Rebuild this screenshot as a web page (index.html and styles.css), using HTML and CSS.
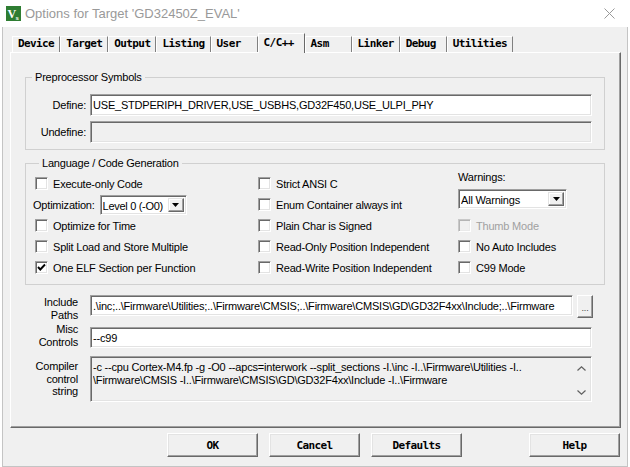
FILE: index.html
```html
<!DOCTYPE html>
<html>
<head>
<meta charset="utf-8">
<title>Options for Target</title>
<link rel="stylesheet" href="styles.css">
</head>
<body>
<div class="titlebar">
  <svg class="appicon" viewBox="0 0 15 15"><rect width="15" height="15" fill="#2e7d32"/><text x="1.5" y="11.5" font-family="Liberation Serif" font-weight="bold" font-size="12" fill="#fff">V</text><text x="9.5" y="13.5" font-family="Liberation Sans" font-weight="bold" font-size="6" fill="#fff">s</text></svg>
  <span class="title">Options for Target 'GD32450Z_EVAL'</span>
  <svg class="close" viewBox="0 0 11 11"><path d="M0.5 0.5 L10.5 10.5 M10.5 0.5 L0.5 10.5" stroke="#999" stroke-width="1" fill="none"/></svg>
</div>
<div class="window">
  <div class="tabs">
    <div class="tab">Device</div>
    <div class="tab">Target</div>
    <div class="tab">Output</div>
    <div class="tab">Listing</div>
    <div class="tab">User</div>
    <div class="tab active">C/C++</div>
    <div class="tab">Asm</div>
    <div class="tab">Linker</div>
    <div class="tab">Debug</div>
    <div class="tab">Utilities</div>
  </div>
  <div class="panel">
    <fieldset class="group pre">
      <legend>Preprocessor Symbols</legend>
      <div class="def-row">
        <span class="def-label">Define:</span>
        <div class="edit wide">USE_STDPERIPH_DRIVER,USE_USBHS,GD32F450,USE_ULPI_PHY</div>
      </div>
      <div class="def-row second">
        <span class="def-label">Undefine:</span>
        <div class="edit wide disabled"></div>
      </div>
    </fieldset>
    <fieldset class="group lang">
      <legend>Language / Code Generation</legend>
      <div class="lang-grid">
        <div class="col col-left">
          <div class="check"><span class="cb"></span>Execute-only Code</div>
          <div class="opt-row"><span>Optimization:</span>
            <div class="combo opt-combo"><span class="combo-text">Level 0 (-O0)</span><span class="drop"><svg viewBox="0 0 7 4"><path d="M0 0 H7 L3.5 4 Z" fill="#000"/></svg></span></div>
          </div>
          <div class="check"><span class="cb"></span>Optimize for Time</div>
          <div class="check"><span class="cb"></span>Split Load and Store Multiple</div>
          <div class="check"><span class="cb"><svg viewBox="0 0 11 11"><path d="M2 5 L4.3 7.5 L9 2.5" stroke="#000" stroke-width="1.9" fill="none"/></svg></span>One ELF Section per Function</div>
        </div>
        <div class="col col-mid">
          <div class="check"><span class="cb"></span>Strict ANSI C</div>
          <div class="check"><span class="cb"></span>Enum Container always int</div>
          <div class="check"><span class="cb"></span>Plain Char is Signed</div>
          <div class="check"><span class="cb"></span>Read-Only Position Independent</div>
          <div class="check"><span class="cb"></span>Read-Write Position Independent</div>
        </div>
        <div class="col col-right">
          <div class="warn-block">
            <span class="warn-label">Warnings:</span>
            <div class="combo warn-combo"><span class="combo-text">All Warnings</span><span class="drop"><svg viewBox="0 0 7 4"><path d="M0 0 H7 L3.5 4 Z" fill="#000"/></svg></span></div>
          </div>
          <div class="check disabled"><span class="cb"></span>Thumb Mode</div>
          <div class="check"><span class="cb"></span>No Auto Includes</div>
          <div class="check"><span class="cb"></span>C99 Mode</div>
        </div>
      </div>
    </fieldset>
    <div class="paths">
      <div class="path-row r1">
        <span class="plabel">Include<br>Paths</span>
        <div class="edit inc">.\inc;..\Firmware\Utilities;..\Firmware\CMSIS;..\Firmware\CMSIS\GD\GD32F4xx\Include;..\Firmware</div>
        <div class="dots">...</div>
      </div>
      <div class="path-row r2">
        <span class="plabel">Misc<br>Controls</span>
        <div class="edit wide misc">--c99</div>
      </div>
      <div class="path-row r3">
        <span class="plabel l3">Compiler<br>control<br>string</span>
        <div class="memo">
          <div class="memo-text">-c --cpu Cortex-M4.fp -g -O0 --apcs=interwork --split_sections -I.\inc -I..\Firmware\Utilities -I..<br>\Firmware\CMSIS -I..\Firmware\CMSIS\GD\GD32F4xx\Include -I..\Firmware</div>
          <div class="scroll">
            <svg viewBox="0 0 9 5"><path d="M0.5 4.5 L4.5 0.8 L8.5 4.5" stroke="#606060" stroke-width="1.2" fill="none"/></svg>
            <svg viewBox="0 0 9 5"><path d="M0.5 0.5 L4.5 4.2 L8.5 0.5" stroke="#606060" stroke-width="1.2" fill="none"/></svg>
          </div>
        </div>
      </div>
    </div>
  </div>
  <div class="buttons">
    <div class="btn">OK</div>
    <div class="btn">Cancel</div>
    <div class="btn">Defaults</div>
    <div class="btn help">Help</div>
  </div>
</div>
</body>
</html>
```
FILE: styles.css
```css
* { box-sizing: border-box; }
html, body { margin: 0; padding: 0; }
body {
  width: 630px;
  height: 467px;
  overflow: hidden;
  background: #fff;
  font-family: "Liberation Sans", Arial, sans-serif;
  font-size: 11px;
  letter-spacing: -0.2px;
  color: #000;
}

.titlebar {
  height: 27px;
  display: flex;
  align-items: center;
  padding-left: 6px;
  background: #fff;
}
.appicon { width: 15px; height: 15px; margin-right: 4px; flex: none; }
.title {
  font-family: "Liberation Sans", Arial, sans-serif;
  font-size: 13px;
  letter-spacing: 0;
  color: #999;
}
.close { margin-left: auto; margin-right: 15px; width: 11px; height: 11px; }

.window {
  margin-left: 2px;
  width: 626px;
  height: 440px;
  background: #f0f0f0;
  border: 1px solid #c4c4c4;
  border-top: none;
  padding-top: 6px;
}

/* tabs */
.tabs {
  display: flex;
  align-items: flex-end;
  height: 19px;
  margin-left: 9px;
  position: relative;
  z-index: 1;
}
.tab {
  height: 16px;
  min-width: 47px;
  padding: 0 5px 2px;
  border-top: 1px solid #fff;
  border-left: 1px solid #fff;
  border-right: 1px solid #808080;
  font-family: "DejaVu Sans Mono", "Liberation Mono", monospace;
  font-weight: bold;
  font-size: 11px;
  letter-spacing: -0.6px;
  line-height: 13px;
  white-space: nowrap;
}
.tab.active {
  height: 20px;
  margin-bottom: -1px;
  padding-top: 2px;
  background: #f0f0f0;
  border-right-color: #696969;
}

/* panel */
.panel {
  margin-left: 7px;
  width: 611px;
  height: 376px;
  border: 1px solid;
  border-color: #fff #696969 #696969 #fff;
  box-shadow: inset -1px -1px #a0a0a0;
  padding: 18px 0 0 14px;
}

.group {
  margin: 0;
  width: 580px;
  border: 1px solid #d0d0d0;
  padding: 0 11px 6px 0;
}
.group legend {
  margin-left: 6px;
  padding: 0 3px;
  line-height: 13px;
}
.pre { padding-top: 10px; }
.lang { margin-top: 7px; padding: 3px 0 6px 7px; }

.def-row { display: flex; align-items: center; gap: 4px; }
.def-row.second { margin-top: 5px; }
.def-label { width: 60px; text-align: right; }

.edit {
  height: 22px;
  background: #fff;
  border: 1px solid;
  border-color: #a0a0a0 #fff #fff #a0a0a0;
  box-shadow: inset 1px 1px #696969, inset -1px -1px #e3e3e3;
  padding: 0 2px;
  line-height: 21px;
  white-space: nowrap;
  overflow: hidden;
}
.edit.wide { width: 502px; }
.edit.disabled { background: #f0f0f0; }

/* language grid */
.lang-grid {
  display: grid;
  grid-template-columns: 225px 200px 1fr;
}
.col { display: flex; flex-direction: column; }
.col-left .check { padding-left: 2px; }
.check {
  height: 21px;
  display: flex;
  align-items: center;
  gap: 5px;
  white-space: nowrap;
}
.check.disabled { color: #a0a0a0; }
.cb {
  width: 13px;
  height: 13px;
  flex: none;
  background: #fff;
  border: 1px solid;
  border-color: #a0a0a0 #fff #fff #a0a0a0;
  box-shadow: inset 1px 1px #696969, inset -1px -1px #e3e3e3;
  display: flex;
  align-items: center;
  justify-content: center;
}
.cb svg { width: 11px; height: 11px; }
.check.disabled .cb {
  background: #f0f0f0;
  border-color: #c8c8c8 #fff #fff #c8c8c8;
  box-shadow: inset 1px 1px #b4b4b4, inset -1px -1px #eaeaea;
}

.opt-row {
  height: 21px;
  display: flex;
  align-items: center;
  gap: 5px;
}
.combo {
  height: 20px;
  display: flex;
  align-items: stretch;
  background: #fff;
  border: 1px solid;
  border-color: #a0a0a0 #fff #fff #a0a0a0;
  box-shadow: inset 1px 1px #696969, inset -1px -1px #e3e3e3;
  padding: 2px 2px 2px 2px;
}
.opt-combo { width: 87px; }
.opt-combo .combo-text { letter-spacing: -0.3px; }
.warn-combo { width: 109px; }
.combo-text { flex: 1; line-height: 16px; white-space: nowrap; overflow: hidden; }
.drop {
  width: 16px;
  flex: none;
  background: #f0f0f0;
  border: 1px solid;
  border-color: #e3e3e3 #696969 #696969 #e3e3e3;
  box-shadow: inset -1px -1px #a0a0a0, inset 1px 1px #fff;
  display: flex;
  align-items: center;
  justify-content: center;
}
.drop svg { width: 7px; height: 4px; }

.warn-block {
  height: 42px;
  display: flex;
  flex-direction: column;
}
.warn-label { line-height: 14px; margin-top: -3px; margin-bottom: 5px; }

/* paths */
.paths { margin-top: 10px; }
.path-row { display: flex; align-items: flex-start; gap: 12px; }
.plabel { width: 53px; text-align: right; line-height: 13px; flex: none; }
.r1 .plabel { margin-top: 1px; }
.r2 { margin-top: 1px; }
.r2 .misc { margin-top: 4px; height: 21px; }
.r3 { margin-top: 7px; }
.plabel.l3 { line-height: 12.5px; margin-top: 4px; }
.edit.inc { width: 483px; height: 21px; line-height: 20px; }
.dots {
  width: 16px;
  height: 23px;
  margin-left: -8px;
  background: #f0f0f0;
  border: 1px solid;
  border-color: #fff #696969 #696969 #fff;
  box-shadow: inset -1px -1px #a0a0a0;
  font-size: 9px;
  text-align: center;
  line-height: 24px;
  color: #444;
}
.memo {
  width: 502px;
  height: 46px;
  display: flex;
  background: #f0f0f0;
  border: 1px solid;
  border-color: #a0a0a0 #fff #fff #a0a0a0;
  box-shadow: inset 1px 1px #696969, inset -1px -1px #e3e3e3;
  padding: 2px 1px 1px 2px;
}
.memo-text { flex: 1; line-height: 12.5px; padding-top: 2px; white-space: nowrap; overflow: hidden; }
.scroll {
  width: 17px;
  flex: none;
  display: flex;
  flex-direction: column;
  justify-content: space-between;
  align-items: center;
  padding: 7px 0 5px;
}
.scroll svg { width: 9px; height: 5px; }

/* buttons */
.buttons {
  display: flex;
  gap: 11px;
  margin-top: 5px;
  padding-left: 164px;
}
.btn {
  width: 91px;
  height: 24px;
  background: #f0f0f0;
  border: 1px solid;
  border-color: #fff #696969 #696969 #fff;
  box-shadow: inset -1px -1px #a0a0a0, inset 1px 1px #e3e3e3;
  display: flex;
  align-items: center;
  justify-content: center;
  font-family: "DejaVu Sans Mono", "Liberation Mono", monospace;
  font-weight: bold;
  font-size: 11px;
  letter-spacing: -0.6px;
}
.btn.help { margin-left: 56px; }
```
